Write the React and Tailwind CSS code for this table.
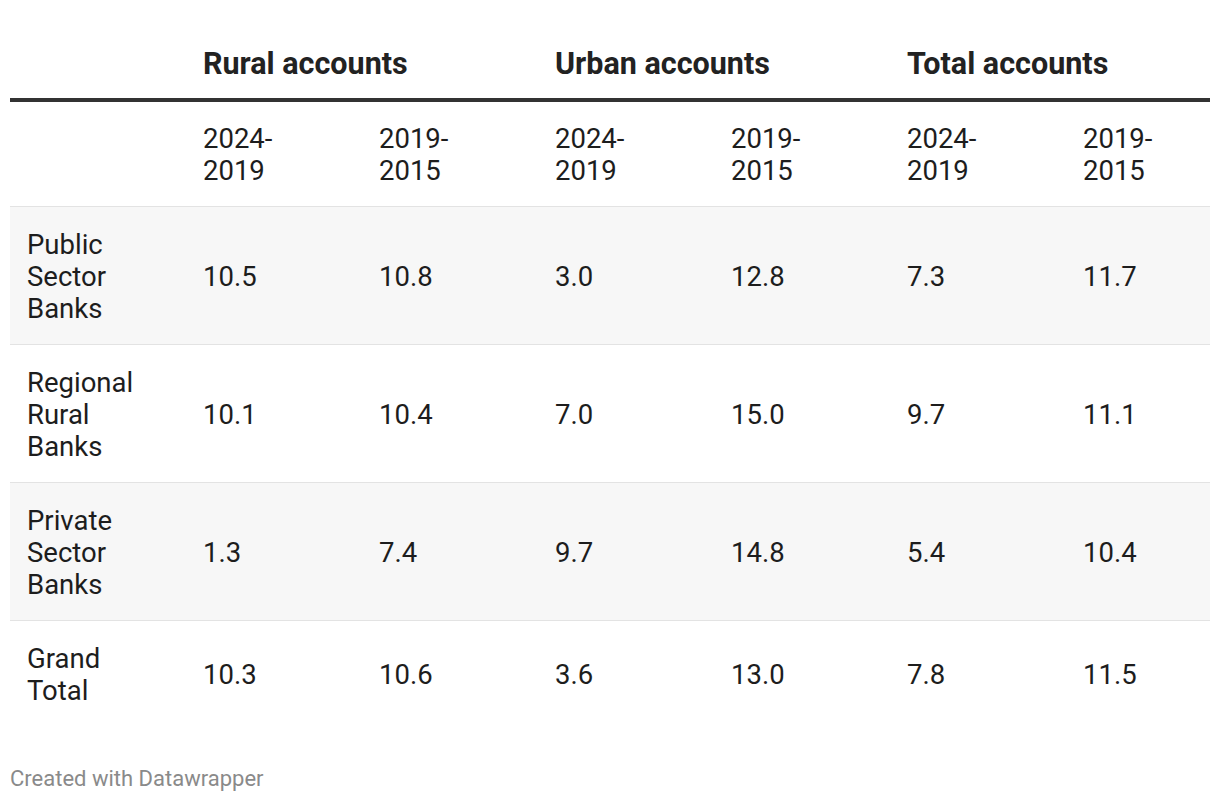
export default function App() {
  const rows = [
    { label: ["Public", "Sector", "Banks"], v: ["10.5", "10.8", "3.0", "12.8", "7.3", "11.7"], gray: true, border: true },
    { label: ["Regional", "Rural", "Banks"], v: ["10.1", "10.4", "7.0", "15.0", "9.7", "11.1"], gray: false, border: true },
    { label: ["Private", "Sector", "Banks"], v: ["1.3", "7.4", "9.7", "14.8", "5.4", "10.4"], gray: true, border: true },
    { label: ["Grand", "Total"], v: ["10.3", "10.6", "3.6", "13.0", "7.8", "11.5"], gray: false, border: false },
  ];
  const grid = "grid grid-cols-[193px_176px_176px_176px_176px_176px_1fr]";
  const years = [["2024-", "2019"], ["2019-", "2015"], ["2024-", "2019"], ["2019-", "2015"], ["2024-", "2019"], ["2019-", "2015"]];
  return (
    <div className="w-[1220px] h-[802px] bg-white px-[10px] text-[#1d1d1d]" style={{ fontFamily: "Roboto, 'Liberation Sans', sans-serif" }}>
      <div className={`${grid} pt-[46px] pb-[16px] border-b-4 border-[#333333]`}>
        <div />
        <div className="col-span-2 text-[30.5px] leading-[36px] font-bold text-[#222222]">Rural accounts</div>
        <div className="col-span-2 text-[30.5px] leading-[36px] font-bold text-[#222222]">Urban accounts</div>
        <div className="col-span-2 text-[30.5px] leading-[36px] font-bold text-[#222222]">Total accounts</div>
      </div>
      <div className={`${grid} pt-[21px] pb-[19px] border-b border-[#e3e3e3] text-[27.5px] leading-[32px]`}>
        <div />
        {years.map((y, i) => (
          <div key={i}>
            <div>{y[0]}</div>
            <div>{y[1]}</div>
          </div>
        ))}
      </div>
      {rows.map((r, i) => (
        <div
          key={i}
          className={`${grid} pt-[22px] pb-[19px] text-[27.5px] leading-[32px] ${r.gray ? "bg-[#f7f7f7]" : "bg-white"} ${r.border ? "border-b border-[#e3e3e3]" : ""}`}
        >
          <div className="pl-[17px]">
            {r.label.map((l, j) => (
              <div key={j}>{l}</div>
            ))}
          </div>
          {r.v.map((v, j) => (
            <div key={j} className="flex items-center">{v}</div>
          ))}
        </div>
      ))}
      <div className="mt-[41px] text-[22px] leading-[24px] text-[#8a8a8a]">Created with Datawrapper</div>
    </div>
  );
}
